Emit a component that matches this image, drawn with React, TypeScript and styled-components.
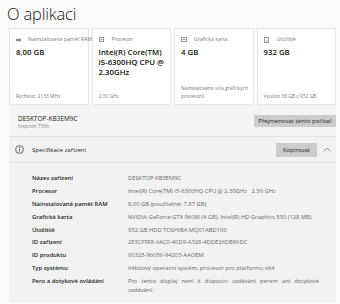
import styled, { createGlobalStyle } from "styled-components"

const specs = [
  { label: "Název zařízení", value: "DESKTOP-KB3EM9C" },
  { label: "Procesor", value: "Intel(R) Core(TM) i5-6300HQ CPU @ 2.30GHz   2.30 GHz" },
  { label: "Nainstalovaná paměť RAM", value: "8,00 GB (použitelné: 7,87 GB)" },
  { label: "Grafická karta", value: "NVIDIA GeForce GTX 960M (4 GB), Intel(R) HD Graphics 530 (128 MB)" },
  { label: "Úložiště", value: "932 GB HDD TOSHIBA MQ01ABD100" },
  { label: "ID zařízení", value: "2E3CF5F8-6AC0-40D9-A328-4DDE26DB86DC" },
  { label: "ID produktu", value: "00325-96056-94203-AAOEM" },
  { label: "Typ systému", value: "64bitový operační systém, procesor pro platformu x64" },
  {
    label: "Pero a dotykové ovládání",
    value: "Pro tento displej není k dispozici zadávání perem ani dotykové zadávání.",
  },
]

const RamIcon = () => (
  <svg width="5" height="4" viewBox="0 0 5 4">
    <rect x="0" y="0.8" width="5" height="2.4" fill="#8a8a8a" />
  </svg>
)

const CpuIcon = () => (
  <svg width="5" height="5" viewBox="0 0 5 5">
    <rect x="0.4" y="0.4" width="4.2" height="4.2" fill="none" stroke="#8a8a8a" strokeWidth="0.8" />
    <rect x="1.7" y="1.7" width="1.6" height="1.6" fill="#8a8a8a" />
  </svg>
)

const GpuIcon = () => (
  <svg width="6" height="5" viewBox="0 0 6 5">
    <rect x="0.4" y="0.6" width="5.2" height="3.8" fill="none" stroke="#8a8a8a" strokeWidth="0.8" />
    <rect x="1.8" y="1.8" width="2.4" height="1.4" fill="#8a8a8a" />
  </svg>
)

const DiskIcon = () => (
  <svg width="5" height="6" viewBox="0 0 5 6">
    <rect x="0.4" y="0.4" width="4.2" height="5.2" fill="none" stroke="#8a8a8a" strokeWidth="0.8" />
    <line x1="1.2" y1="4" x2="3.8" y2="4" stroke="#8a8a8a" strokeWidth="0.7" />
  </svg>
)

const cards = [
  { icon: <RamIcon />, label: "Nainstalovaná paměť RAM", value: "8,00 GB", foot: "Rychlost: 2133 MHz" },
  { icon: <CpuIcon />, label: "Procesor", value: "Intel(R) Core(TM) i5-6300HQ CPU @ 2.30GHz", foot: "2.30 GHz" },
  { icon: <GpuIcon />, label: "Grafická karta", value: "4 GB", foot: "Nainstalováno více grafických procesorů" },
  { icon: <DiskIcon />, label: "Úložiště", value: "932 GB", foot: "Využito 38 GB z 932 GB" },
]

const App = () => {
  return (
    <>
      <GlobalStyle />
      <Page>
        <Title>O aplikaci</Title>
        <CardRow>
          {cards.map((c) => (
            <Card key={c.label}>
              <CardLabel>
                <IconSlot>{c.icon}</IconSlot>
                {c.label}
              </CardLabel>
              <CardValue>{c.value}</CardValue>
              <CardFoot>{c.foot}</CardFoot>
            </Card>
          ))}
        </CardRow>
        <Panel>
          <DeviceRow>
            <DeviceName>
              <strong>DESKTOP-KB3EM9C</strong>
              <span>Inspiron 7566</span>
            </DeviceName>
            <GrayButton>Přejmenovat tento počítač</GrayButton>
          </DeviceRow>
          <SpecHeader>
            <InfoIcon>
              <svg width="9" height="9" viewBox="0 0 9 9">
                <circle cx="4.5" cy="4.5" r="3.9" fill="none" stroke="#444" strokeWidth="0.8" />
                <line x1="4.5" y1="3.9" x2="4.5" y2="6.6" stroke="#444" strokeWidth="0.8" />
                <circle cx="4.5" cy="2.6" r="0.5" fill="#444" />
              </svg>
            </InfoIcon>
            <SpecTitle>Specifikace zařízení</SpecTitle>
            <GrayButton $small>Kopírovat</GrayButton>
            <Chevron>
              <svg width="8" height="5" viewBox="0 0 8 5">
                <polyline points="0.5,4.5 4,1 7.5,4.5" fill="none" stroke="#888" strokeWidth="0.8" />
              </svg>
            </Chevron>
          </SpecHeader>
          <SpecList>
            {specs.map((s) => (
              <SpecRow key={s.label}>
                <SpecLabel>{s.label}</SpecLabel>
                <SpecValue>{s.value}</SpecValue>
              </SpecRow>
            ))}
          </SpecList>
        </Panel>
      </Page>
    </>
  )
}

const GlobalStyle = createGlobalStyle`
  body {
    margin: 0;
    background: #fbfbfb;
    font-family: "Open Sans", "Noto Sans", sans-serif;
    color: #1b1b1b;
  }
`

const Page = styled.div`
  width: 340px;
  height: 304px;
  overflow: hidden;
`

const Title = styled.h1`
  margin: 0;
  padding: 2px 0 0 7px;
  height: 25px;
  box-sizing: border-box;
  font-size: 16.5px;
  font-weight: 300;
  letter-spacing: -0.2px;
  color: #1a1a1a;
`

const CardRow = styled.div`
  display: flex;
  gap: 3px;
  padding: 3px 4px 0 9px;
`

const Card = styled.div`
  flex: 1;
  min-width: 0;
  height: 77px;
  box-sizing: border-box;
  background: #fff;
  border: 1px solid #e8e8e8;
  padding: 7px 3px 4px 6px;
  display: flex;
  flex-direction: column;
`

const CardLabel = styled.div`
  display: flex;
  align-items: center;
  gap: 7px;
  font-size: 5.2px;
  line-height: 7px;
  color: #7a7a7a;
  white-space: nowrap;
`

const IconSlot = styled.span`
  display: flex;
  width: 6px;
  justify-content: center;
`

const CardValue = styled.div`
  margin-top: 4px;
  font-size: 7.8px;
  font-weight: 600;
  line-height: 10px;
  color: #111;
`

const CardFoot = styled.div`
  margin-top: auto;
  font-size: 5px;
  line-height: 8px;
  letter-spacing: -0.05px;
  color: #7a7a7a;
`

const Panel = styled.div`
  margin: 0 4px 0 9px;
  background: #f2f2f2;
`

const DeviceRow = styled.div`
  display: flex;
  align-items: flex-start;
  justify-content: space-between;
  height: 32px;
  box-sizing: border-box;
  padding: 7px 0 0 9px;
  border-bottom: 1px solid #e2e2e2;
  background: #f4f4f4;
`

const DeviceName = styled.div`
  display: flex;
  flex-direction: column;
  padding-top: 3px;
  strong {
    font-weight: 400;
    font-size: 6.5px;
    line-height: 8px;
    color: #222;
  }
  span {
    font-size: 4.8px;
    line-height: 6px;
    color: #8a8a8a;
  }
`

const GrayButton = styled.div<{ $small?: boolean }>`
  background: #cccccc;
  font-size: 6px;
  color: #222;
  height: ${({ $small }) => ($small ? "14px" : "12px")};
  margin-top: ${({ $small }) => ($small ? "0" : "3px")};
  padding: 0 ${({ $small }) => ($small ? "7px" : "4px")};
  display: flex;
  align-items: center;
  white-space: nowrap;
`

const SpecHeader = styled.div`
  display: flex;
  align-items: center;
  height: 26px;
  box-sizing: border-box;
  padding: 0 0 0 6px;
  border-bottom: 1px solid #e2e2e2;
`

const InfoIcon = styled.span`
  display: flex;
  width: 9px;
  margin-right: 8px;
`

const SpecTitle = styled.div`
  flex: 1;
  font-size: 6px;
  color: #222;
`

const Chevron = styled.span`
  display: flex;
  width: 19px;
  justify-content: center;
`

const SpecList = styled.div`
  padding: 11px 17px 8px 23px;
  display: flex;
  flex-direction: column;
  gap: 3.9px;
`

const SpecRow = styled.div`
  display: grid;
  grid-template-columns: 96px 1fr;
  min-height: 9px;
`

const SpecLabel = styled.div`
  font-size: 5.9px;
  font-weight: 600;
  line-height: 9px;
  color: #222;
`

const SpecValue = styled.div`
  font-size: 5.8px;
  line-height: 9px;
  color: #666;
  text-align: justify;
  white-space: pre-wrap;
`

export default App
